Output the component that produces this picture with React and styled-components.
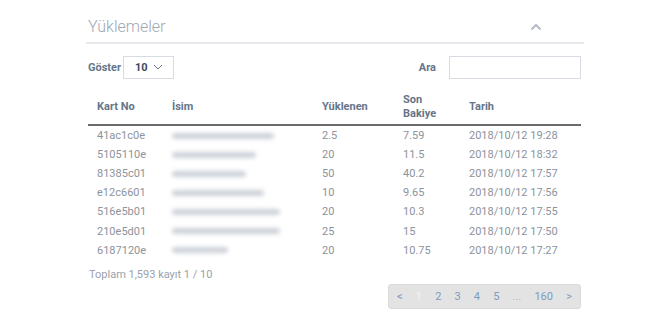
import React from "react";
import styled, { createGlobalStyle } from "styled-components";

const GlobalStyle = createGlobalStyle`
    body {
        margin: 0;
        background: #ffffff;
        font-family: Roboto, "Liberation Sans", sans-serif;
    }
`

const rows = [
    { id: "41ac1c0e", name: 102, amount: "2.5", balance: "7.59", date: "2018/10/12 19:28" },
    { id: "5105110e", name: 84, amount: "20", balance: "11.5", date: "2018/10/12 18:32" },
    { id: "81385c01", name: 74, amount: "50", balance: "40.2", date: "2018/10/12 17:57" },
    { id: "e12c6601", name: 92, amount: "10", balance: "9.65", date: "2018/10/12 17:56" },
    { id: "516e5b01", name: 108, amount: "20", balance: "10.3", date: "2018/10/12 17:55" },
    { id: "210e5d01", name: 108, amount: "25", balance: "15", date: "2018/10/12 17:50" },
    { id: "6187120e", name: 56, amount: "20", balance: "10.75", date: "2018/10/12 17:27" },
]

const pages = ["2", "3", "4", "5"]

function App() {
    return (
        <>
            <GlobalStyle />
            <Panel>
                <Head>
                    <Title>Yüklemeler</Title>
                    <svg width="12" height="8" viewBox="0 0 12 8">
                        <path d="M1.5 6.5 L6 2 L10.5 6.5" fill="none" stroke="#b5bcc6" strokeWidth="2" />
                    </svg>
                </Head>

                <Controls>
                    <Label>Göster</Label>
                    <Select>
                        <span>10</span>
                        <svg width="10" height="6" viewBox="0 0 10 6">
                            <path d="M1 1 L5 5 L9 1" fill="none" stroke="#6f7a88" strokeWidth="1" />
                        </svg>
                    </Select>
                    <Spacer />
                    <Label>Ara</Label>
                    <Search />
                </Controls>

                <Table>
                    <HeaderRow>
                        <Th>Kart No</Th>
                        <Th>İsim</Th>
                        <Th>Yüklenen</Th>
                        <Th>Son<br />Bakiye</Th>
                        <Th>Tarih</Th>
                    </HeaderRow>
                    {rows.map((r) => (
                        <Row key={r.id}>
                            <Td>{r.id}</Td>
                            <Td><Blur style={{ width: r.name }} /></Td>
                            <Td>{r.amount}</Td>
                            <Td>{r.balance}</Td>
                            <Td>{r.date}</Td>
                        </Row>
                    ))}
                </Table>

                <Total>Toplam 1,593 kayıt 1 / 10</Total>

                <PagerRow>
                    <Pager>
                        <PageItem>&lt;</PageItem>
                        <PageItem $active>1</PageItem>
                        {pages.map((p) => (
                            <PageItem key={p}>{p}</PageItem>
                        ))}
                        <PageItem $muted>...</PageItem>
                        <PageItem>160</PageItem>
                        <PageItem>&gt;</PageItem>
                    </Pager>
                </PagerRow>
            </Panel>
        </>
    )
}

export default App

const Panel = styled.div`
    width: 498px;
    margin-left: 86px;
    padding-top: 11px;
`

const Head = styled.div`
    height: 31px;
    display: flex;
    align-items: center;
    justify-content: space-between;
    padding: 0 42px 0 2px;
    border-bottom: 2px solid #e8eaee;
`

const Title = styled.div`
    font-size: 16px;
    font-weight: 300;
    color: #9ea7b4;
`

const Controls = styled.div`
    height: 24px;
    display: flex;
    align-items: center;
    gap: 0;
    margin-top: 11px;
    padding: 0 3px 0 2px;
`

const Label = styled.span`
    font-size: 11px;
    font-weight: 700;
    color: #66758a;
`

const Select = styled.div`
    width: 51px;
    height: 23px;
    box-sizing: border-box;
    border: 1px solid #d8dce2;
    margin-left: 2px;
    display: flex;
    align-items: center;
    justify-content: space-between;
    padding: 0 10px 0 11px;
    font-size: 11px;
    font-weight: 700;
    color: #3d4a5c;
`

const Spacer = styled.div`
    flex: 1;
`

const Search = styled.div`
    width: 132px;
    height: 23px;
    box-sizing: border-box;
    border: 1px solid #d8dce2;
    margin-left: 13px;
`

const Table = styled.div`
    margin: 10px 3px 0 2px;
`

const HeaderRow = styled.div`
    display: grid;
    grid-template-columns: 75px 150px 81px 66px 1fr;
    height: 35px;
    align-items: center;
    border-bottom: 2px solid #6b6b6b;
`

const Th = styled.div`
    padding-left: 9px;
    font-size: 11px;
    font-weight: 700;
    line-height: 14px;
    color: #66758a;
`

const Row = styled.div`
    display: grid;
    grid-template-columns: 75px 150px 81px 66px 1fr;
    height: 19.1px;
    align-items: center;
`

const Td = styled.div`
    padding-left: 9px;
    font-size: 11px;
    color: #8d939c;
    white-space: nowrap;
`

const Blur = styled.div`
    height: 6px;
    background: #cdd1d8;
    border-radius: 3px;
    filter: blur(2px);
`

const Total = styled.div`
    margin-top: 8px;
    padding-left: 3px;
    font-size: 11px;
    color: #9aa1ab;
`

const PagerRow = styled.div`
    display: flex;
    justify-content: flex-end;
    margin-top: 3px;
    padding-right: 3px;
`

const Pager = styled.div`
    width: 193px;
    height: 25px;
    box-sizing: border-box;
    background: #e3e3e3;
    border: 1px solid #dadada;
    border-radius: 3px;
    display: flex;
    align-items: center;
    justify-content: space-between;
    padding: 0 8px;
`

const PageItem = styled.span`
    font-size: 11px;
    color: ${(p) => (p.$active ? "#f4f4f4" : p.$muted ? "#b4b8be" : "#7d9ac0")};
`
